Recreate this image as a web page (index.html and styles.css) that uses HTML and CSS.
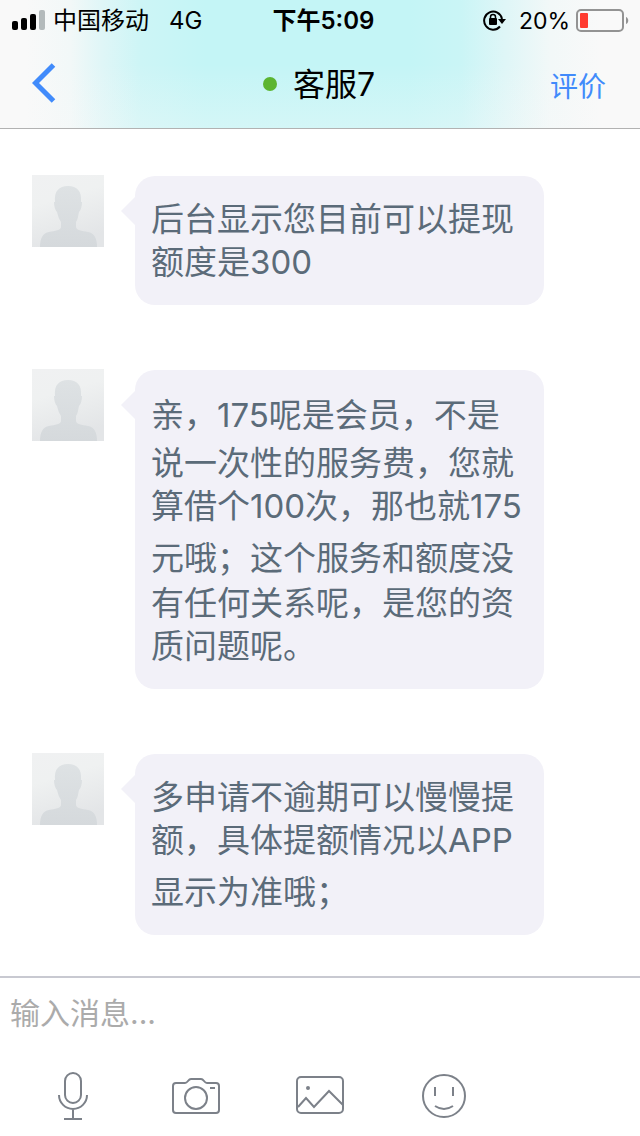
FILE: index.html
```html
<!DOCTYPE html>
<html lang="zh-CN">
<head>
<meta charset="utf-8">
<meta name="viewport" content="width=device-width, initial-scale=1">
<title>客服7</title>
<link rel="stylesheet" href="styles.css">
</head>
<body>
<svg class="defs" aria-hidden="true">
  <defs>
    <linearGradient id="avatar-bg" x1="0" y1="0" x2="0.3" y2="1">
      <stop offset="0" stop-color="#f0f1f2"/>
      <stop offset="0.4" stop-color="#eff1f1"/>
      <stop offset="1" stop-color="#e3e5e7"/>
    </linearGradient>
    <linearGradient id="avatar-fg" x1="0" y1="0" x2="0" y2="1">
      <stop offset="0" stop-color="#dee2e4"/>
      <stop offset="1" stop-color="#d5d9dc"/>
    </linearGradient>
    <symbol id="avatar" viewBox="0 0 72 72">
      <rect width="72" height="72" fill="url(#avatar-bg)"/>
      <path fill="url(#avatar-fg)" d="M8 72C8 63 11 58 17 57C23 56 29 55 29 52V47C27 44 26 41 25 37C23 35 22 31 22 27H23C22 16 27 11 36 11C45 11 50 16 49 27H50C50 31 49 35 47 37C46 41 46 44 44 47V52C44 55 50 56 56 57C62 58 65 63 65 72Z"/>
    </symbol>
  </defs>
</svg>
<div class="app">
  <header class="header">
    <div class="status">
      <div class="status-left">
        <svg class="signal" width="33" height="20" viewBox="0 0 33 20" aria-hidden="true">
          <rect x="0" y="11" width="6" height="9" rx="2"/>
          <rect x="9" y="8" width="6" height="12" rx="2"/>
          <rect x="18" y="4" width="6" height="16" rx="2"/>
          <rect x="27" y="0" width="6" height="20" rx="2" fill="#b3babb"/>
        </svg>
        <span>中国移动</span>
        <span class="network">4G</span>
      </div>
      <time class="clock">下午5:09</time>
      <div class="status-right">
        <svg class="lock" width="24" height="22" viewBox="0 0 24 22" aria-hidden="true">
          <path d="M17 17.500A9 9 0 1 1 19 10" fill="none" stroke="#000" stroke-width="2"/>
          <path d="M15 10h8l-4 5z"/>
          <rect x="6" y="9" width="8" height="7" rx="1"/>
          <path d="M7.500 9.500V8a2.500 2.500 0 0 1 5 0v1.500" fill="none" stroke="#000" stroke-width="1.500"/>
        </svg>
        <span>20%</span>
        <svg class="battery" width="53" height="23" viewBox="0 0 53 23" aria-hidden="true">
          <rect x="1" y="1" width="46" height="21" rx="4" fill="none" stroke="#939393" stroke-width="2"/>
          <rect x="4" y="4" width="8" height="15" rx="1" fill="#ff3b30"/>
          <path d="M50 8c3 1 3 6 0 7z" fill="#939393"/>
        </svg>
      </div>
    </div>
    <nav class="nav">
      <button class="back" type="button" aria-label="返回">
        <svg width="24" height="40" viewBox="0 0 24 40" aria-hidden="true">
          <path d="M21.500 2L3.500 20L21.500 38" fill="none" stroke="#418bfb" stroke-width="5"/>
        </svg>
      </button>
      <h1 class="title"><span class="online"></span>客服7</h1>
      <button class="rate" type="button">评价</button>
    </nav>
  </header>

  <main class="chat">
    <article class="message">
      <svg class="avatar" role="img" aria-label="客服头像"><use href="#avatar"/></svg>
      <p class="bubble">
        <span class="line">后台显示您目前可以提现</span>
        <span class="line">额度是300</span>
      </p>
    </article>
    <article class="message">
      <svg class="avatar" role="img" aria-label="客服头像"><use href="#avatar"/></svg>
      <p class="bubble">
        <span class="line line-open">亲，175呢是会员，不是</span>
        <span class="line line-roomy">说一次性的服务费，您就</span>
        <span class="line">算借个100次，那也就175</span>
        <span class="line line-tall">元哦；这个服务和额度没</span>
        <span class="line line-open">有任何关系呢，是您的资</span>
        <span class="line">质问题呢。</span>
      </p>
    </article>
    <article class="message">
      <svg class="avatar" role="img" aria-label="客服头像"><use href="#avatar"/></svg>
      <p class="bubble">
        <span class="line">多申请不逾期可以慢慢提</span>
        <span class="line">额，具体提额情况以APP</span>
        <span class="line line-tall">显示为准哦；</span>
      </p>
    </article>
  </main>

  <footer class="composer">
    <input class="field" type="text" placeholder="输入消息..." aria-label="输入消息">
    <div class="tools">
      <button class="tool" type="button" aria-label="语音">
        <svg width="48" height="48" viewBox="0 0 48 48" aria-hidden="true">
          <rect x="17" y="1" width="16" height="30" rx="8"/>
          <path d="M11 23A14 14 0 0 0 39 23M25 37V47M16 47H34"/>
        </svg>
      </button>
      <button class="tool" type="button" aria-label="拍照">
        <svg width="48" height="48" viewBox="0 0 48 48" aria-hidden="true">
          <path d="M4 11H13C16 11 16 7 19 7H29C32 7 32 11 35 11H44Q47 11 47 14V38Q47 41 44 41H4Q1 41 1 38V14Q1 11 4 11Z"/>
          <circle cx="24" cy="26" r="11"/>
          <path d="M38 16H43"/>
        </svg>
      </button>
      <button class="tool" type="button" aria-label="图片">
        <svg width="48" height="48" viewBox="0 0 48 48" aria-hidden="true">
          <rect x="1" y="5" width="46" height="36" rx="4"/>
          <path d="M2 35L10 26L18 35L33 19L47 33"/>
          <circle cx="12" cy="16" r="1"/>
        </svg>
      </button>
      <button class="tool" type="button" aria-label="表情">
        <svg width="48" height="48" viewBox="0 0 48 48" aria-hidden="true">
          <circle cx="24" cy="24" r="21"/>
          <path d="M15 15V24M33 15V24M15 34Q24 40 33 34"/>
        </svg>
      </button>
    </div>
  </footer>
</div>
</body>
</html>
```
FILE: styles.css
```css
* {
  box-sizing: border-box;
}

body {
  margin: 0;
  background: #fff;
  color: #000;
  font-family: Inter, "Noto Sans CJK SC", sans-serif;
}

button {
  border: 0;
  padding: 0;
  background: none;
  font: inherit;
  cursor: pointer;
}

svg {
  display: block;
  flex: none;
}

.defs {
  position: absolute;
  width: 0;
  height: 0;
}

.app {
  display: flex;
  flex-direction: column;
  min-height: 100vh;
}

.header {
  border-bottom: 1px solid #b2b2b2;
  background:
    linear-gradient(rgba(249, 249, 249, 0) 50%, rgba(249, 249, 249, 0.3)),
    linear-gradient(90deg, #f9f9f9 4%, #f2f8f8 11%, #dff6f7 16%, #cdf5f6 22%, #c4f5f6 32%, #c4f5f6 64%, #caf5f6 72%, #dff6f7 79%, #f2f8f8 86%, #f9f9f9 94%);
}

.status {
  display: grid;
  grid-template-columns: 1fr auto 1fr;
  align-items: center;
  height: 42px;
  padding: 0 11px 0 12px;
  font-size: 24px;
  line-height: 42px;
}

.status-left,
.status-right {
  display: flex;
  align-items: center;
}

.status-left {
  gap: 8px;
}

.signal,
.lock,
.battery {
  margin-bottom: 2px;
}

.network {
  margin-left: 12px;
}

.clock {
  padding-left: 6px;
  font-weight: 600;
}

.status-right {
  justify-content: flex-end;
  font-size: 23px;
}

.lock {
  margin-right: 12px;
}

.battery {
  margin-left: 6px;
}

.nav {
  display: grid;
  grid-template-columns: 1fr auto 1fr;
  align-items: center;
  height: 86px;
  padding: 0 34px 0 32px;
}

.back {
  justify-self: start;
  padding-bottom: 4px;
}

.title {
  display: flex;
  align-items: center;
  gap: 16px;
  margin: 0;
  font-size: 32px;
  font-weight: 400;
  line-height: 44px;
}

.online {
  width: 14px;
  height: 14px;
  margin-bottom: 2px;
  border-radius: 50%;
  background: #5cb531;
}

.rate {
  justify-self: end;
  color: #418bfb;
  font-size: 28px;
}

.chat {
  display: flex;
  flex: 1;
  flex-direction: column;
  gap: 64px;
  padding: 46px 96px 40px 32px;
}

.message {
  display: flex;
  align-items: flex-start;
  gap: 31px;
}

.avatar {
  width: 72px;
  height: 72px;
}

.bubble {
  position: relative;
  flex: 1;
  margin: 1px 0 0;
  padding: 22px 8px 21px 16px;
  border-radius: 20px;
  background: #f2f1f8;
  color: #5b6b79;
  font-size: 33px;
  line-height: 43px;
}

.bubble::before {
  content: "";
  position: absolute;
  top: 21px;
  left: -14px;
  width: 14px;
  height: 28px;
  background: #f2f1f8;
  clip-path: polygon(0 50%, 100% 0, 100% 100%);
}

.line {
  display: block;
}

.line-open {
  padding-top: 2px;
}

.line-roomy {
  padding-top: 5px;
}

.line-tall {
  padding-top: 9px;
}

.composer {
  border-top: 2px solid #c8c9d1;
  padding-bottom: 16px;
}

.field {
  display: block;
  width: 100%;
  height: 70px;
  padding: 0 10px;
  border: 0;
  outline: 0;
  background: none;
  color: #5b6b79;
  font: inherit;
  font-size: 30px;
}

.field::placeholder {
  color: #ababab;
  opacity: 1;
}

.tools {
  display: flex;
  gap: 76px;
  padding: 24px 48px 0;
}

.tool svg {
  fill: none;
  stroke: #7c8189;
  stroke-width: 2;
}
```
